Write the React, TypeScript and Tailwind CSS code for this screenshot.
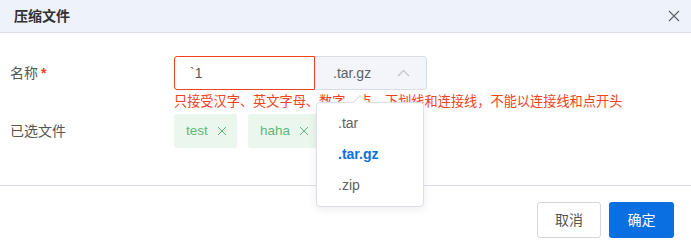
import React from "react";

function X({ c = "#5fb878", s = 10 }: { c?: string; s?: number }) {
  return (
    <svg width={s} height={s} viewBox="0 0 10 10">
      <path d="M1 1L9 9M9 1L1 9" stroke={c} strokeWidth="1" fill="none" />
    </svg>
  );
}

export default function App() {
  const font = { fontFamily: '"Liberation Sans", "Noto Sans CJK SC", sans-serif' };
  return (
    <div className="relative w-[691px] h-[250px] bg-white overflow-hidden" style={font}>
      <div className="h-[33px] bg-[#eef2fa] border-b border-[#dcdfe6] flex items-center justify-between pl-[14px] pr-[11px]">
        <span className="text-[14px] font-bold text-[#303133]">压缩文件</span>
        <svg width="12" height="12" viewBox="0 0 12 12" className="text-[#606266]">
          <path d="M1 1L11 11M11 1L1 11" stroke="currentColor" strokeWidth="1.1" fill="none" />
        </svg>
      </div>
      <div className="pl-[10px] pt-[23px] h-[153px] border-b border-[#dcdfe6]">
        <div className="flex items-center h-[34px]">
          <div className="w-[164px] text-[14px] text-[#555] flex items-center">
            名称<span className="text-[#f0421d] ml-[3px] font-bold text-[14px]">*</span>
          </div>
          <div className="w-[141px] h-[34px] border border-[#f0421d] rounded-l-[3px] flex items-center pl-[15px] text-[14px] text-[#555]">
            `1
          </div>
          <div className="w-[112px] h-[34px] bg-[#f3f5fa] border border-l-0 border-[#d9dde6] rounded-r-[4px] flex items-center justify-between pl-[18px] pr-[16px] text-[14px] text-[#606266]">
            <span>.tar.gz</span>
            <svg width="13" height="8" viewBox="0 0 13 8">
              <path d="M1 7L6.5 1.5L12 7" stroke="#c0c4cc" strokeWidth="1.2" fill="none" />
            </svg>
          </div>
        </div>
        <div className="pl-[164px] h-[24px] flex items-center text-[13.2px] text-[#f0421d] leading-none">
          只接受汉字、英文字母、数字、点、下划线和连接线，不能以连接线和点开头
        </div>
        <div className="flex items-center h-[34px]">
          <div className="w-[164px] text-[14px] text-[#555]">已选文件</div>
          <div className="flex gap-[11px]">
            <div className="h-[34px] w-[63px] pl-[12px] bg-[#ebf6ee] rounded-[3px] flex items-center gap-[9px] text-[13.5px] text-[#5fb878]">
              <span>test</span>
              <X />
            </div>
            <div className="h-[34px] w-[70px] pl-[12px] bg-[#ebf6ee] rounded-[3px] flex items-center gap-[9px] text-[13.5px] text-[#5fb878]">
              <span>haha</span>
              <X />
            </div>
          </div>
        </div>
      </div>
      <div className="flex justify-end gap-[8px] pt-[16px] pr-[17px]">
        <button className="w-[64px] h-[36px] border border-[#d3d6dd] rounded-[3px] bg-white text-[14px] text-[#555]">取消</button>
        <button className="w-[65px] h-[36px] rounded-[3px] bg-[#0a6fe0] text-[14px] text-white">确定</button>
      </div>

      <div className="absolute left-[316px] top-[102px] w-[108px] h-[105px] bg-white border border-[#dcdfe6] rounded-[4px] shadow-[0_2px_10px_rgba(0,0,0,0.08)] flex flex-col justify-center">
        <div className="absolute -top-[6px] left-[38px] w-[10px] h-[10px] bg-white border-l border-t border-[#dcdfe6] rotate-45"></div>
        <div className="h-[31px] flex items-center pl-[21px] text-[14px] text-[#606266]">.tar</div>
        <div className="h-[31px] flex items-center pl-[21px] text-[14px] font-bold text-[#0a6fe0]">.tar.gz</div>
        <div className="h-[31px] flex items-center pl-[21px] text-[14px] text-[#606266]">.zip</div>
      </div>
    </div>
  );
}
